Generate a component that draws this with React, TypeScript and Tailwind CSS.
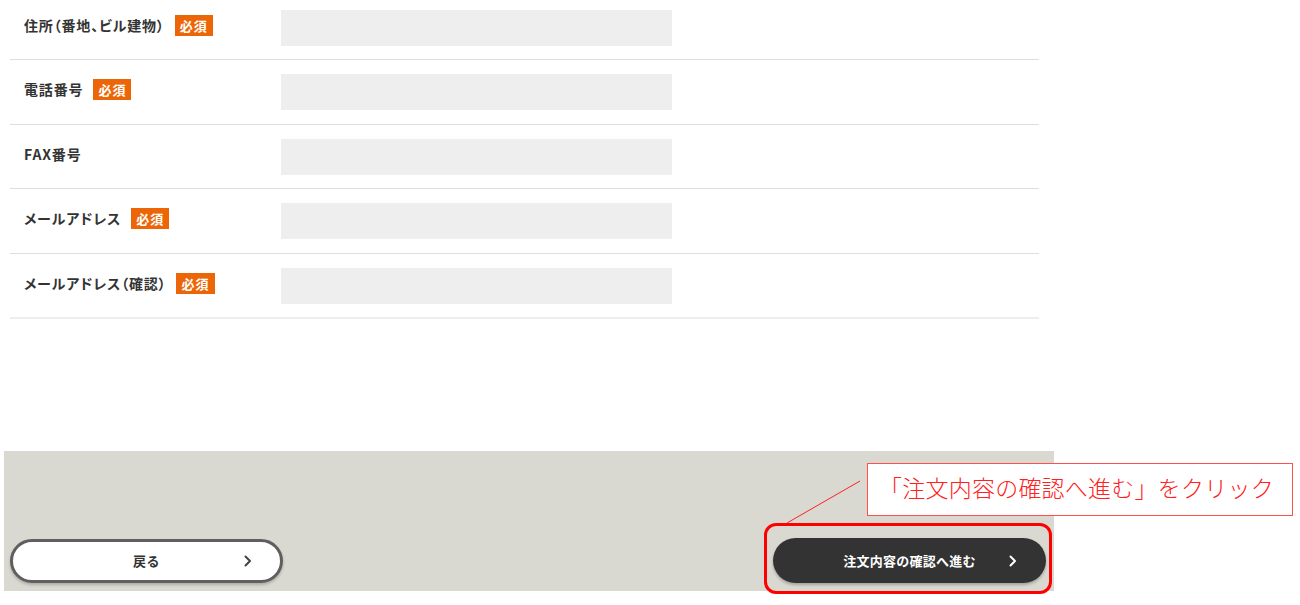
import React from "react";

const rows: { label: string; required: boolean }[] = [
  { label: "住所（番地、ビル建物）", required: true },
  { label: "電話番号", required: true },
  { label: "FAX番号", required: false },
  { label: "メールアドレス", required: true },
  { label: "メールアドレス（確認）", required: true },
];

function Chevron({ color }: { color: string }) {
  return (
    <svg width="8" height="12" viewBox="0 0 8 12" fill="none">
      <path d="M1.5 1.5 L6 6 L1.5 10.5" stroke={color} strokeWidth="2" strokeLinecap="round" strokeLinejoin="round" />
    </svg>
  );
}

export default function App() {
  return (
    <div
      className="relative w-[1300px] h-[605px] overflow-hidden bg-white"
      style={{ fontFamily: '"Noto Sans CJK JP", "Noto Sans", sans-serif' }}
    >
      <div className="ml-[10px] mt-[-4.5px] w-[1029px]">
        {rows.map((r, i) => (
          <div
            key={i}
            className={`flex items-center pt-[14px] pb-[13.5px] ${i === rows.length - 1 ? "border-b-2 border-[#eeeeee]" : "border-b border-[#dedede]"}`}
          >
            <div className="w-[271px] pl-[14px] pb-[5px] flex items-center gap-[10px]">
              <span className="text-[14px] font-bold text-[#333333] tracking-[0.06em] [font-feature-settings:'palt']">
                {r.label}
              </span>
              {r.required && (
                <span className="bg-[#ec6608] text-white text-[13px] font-bold leading-none px-[5px] py-[4px] tracking-[0.08em]">
                  必須
                </span>
              )}
            </div>
            <div className="w-[391px] h-[36px] bg-[#eeeeee]" />
          </div>
        ))}
      </div>

      <div className="ml-[4px] mt-[132px] w-[1050px] h-[140px] bg-[#d9d9d1] flex items-end justify-between pl-[6px] pr-[8px] pb-[8px]">
        <div className="w-[273px] h-[44px] rounded-full bg-white border-[3px] border-[#5f5f5f] shadow-[0_2px_3px_rgba(0,0,0,0.2)] relative flex items-center justify-center">
          <span className="text-[13px] font-bold text-[#333333] tracking-[0.04em]">戻る</span>
          <span className="absolute right-[28px] top-1/2 -translate-y-1/2 flex">
            <Chevron color="#444444" />
          </span>
        </div>
        <div className="relative">
          <div className="absolute left-[-9px] right-[-6px] top-[-15px] bottom-[-11px] border-[3px] border-[#ff0000] rounded-[12px]" />
          <div className="w-[273px] h-[45px] rounded-full bg-[#333333] shadow-[0_2px_3px_rgba(0,0,0,0.25)] relative flex items-center justify-center">
            <span className="text-[13px] font-bold text-white tracking-[0.02em]">注文内容の確認へ進む</span>
            <span className="absolute right-[29px] top-1/2 -translate-y-1/2 flex">
              <Chevron color="#ffffff" />
            </span>
          </div>
        </div>
      </div>

      <svg className="absolute left-0 top-0 pointer-events-none" width="1300" height="605">
        <line x1="860" y1="481" x2="787" y2="523" stroke="#ff2020" strokeWidth="1" />
      </svg>
      <div className="absolute left-[867px] top-[463px] w-[426px] h-[53px] bg-white border border-[#ff5050] flex items-center pl-[11px]">
        <span
          className="text-[23px] text-[#ff2020] leading-none tracking-[0.01em]"
          style={{ fontFamily: '"Liberation Serif", "Noto Sans CJK JP", serif', fontWeight: 300 }}
        >
          「注文内容の確認へ進む」をクリック
        </span>
      </div>
    </div>
  );
}
